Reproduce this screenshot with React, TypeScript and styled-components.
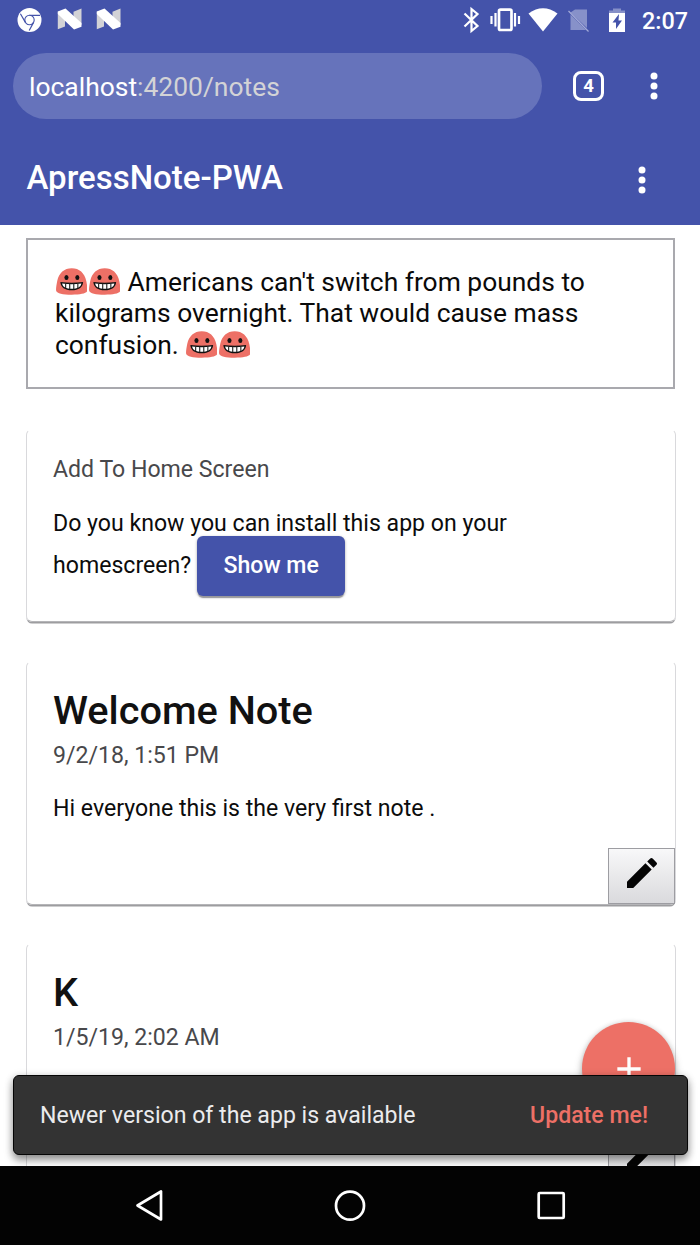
import React from "react";
import styled, { createGlobalStyle } from "styled-components";

const Global = createGlobalStyle`
  * { box-sizing: border-box; }
  body { margin: 0; background: #fff; font-family: Roboto, "Liberation Sans", sans-serif; }
  button { font-family: inherit; padding: 0; margin: 0; }
  h1, h2, p { margin: 0; }
  svg { display: block; flex: none; }
`;

const Screen = styled.div`
  position: relative;
  display: flex;
  flex-direction: column;
  width: 700px;
  height: 1245px;
  overflow: hidden;
  background: #fff;
`;

const BrowserChrome = styled.header`
  flex: none;
  height: 133px;
  background: #4453aa;
  color: #fff;
`;

const StatusBar = styled.div`
  display: flex;
  align-items: center;
  height: 40px;
  padding: 0 12px 0 17px;
`;

const Notifications = styled.div`
  display: flex;
  gap: 13.5px;
  margin-right: auto;
`;

const SystemIcons = styled.div`
  display: flex;
  align-items: center;
`;

const Clock = styled.span`
  width: 46px;
  margin-left: 16px;
  padding-top: 2px;
  font-size: 23.4px;
  font-weight: 500;
  line-height: 28px;
`;

const AddressRow = styled.div`
  display: flex;
  align-items: center;
  padding: 13px 26px 0 13px;
`;

const AddressField = styled.div`
  width: 529px;
  height: 66px;
  padding: 2px 16px 0;
  border-radius: 33px;
  background: #6673bb;
  font-size: 26.45px;
  line-height: 64.5px;
`;

const Path = styled.span`
  color: #d3d3d6;
`;

const TabCount = styled.div`
  display: flex;
  align-items: center;
  justify-content: center;
  width: 31px;
  height: 30px;
  margin-left: 31px;
  border: 3px solid #fff;
  border-radius: 8px;
  font-size: 18.5px;
  font-weight: 700;
  line-height: 24px;
`;

const MenuButton = styled.button<{ $left: string }>`
  width: 40px;
  height: 40px;
  margin-left: ${(p) => p.$left};
  border: 0;
  background: none;
  color: #fff;
`;

const Toolbar = styled.div`
  display: flex;
  align-items: center;
  flex: none;
  height: 92px;
  padding: 1px 38.5px 0 26.5px;
  background: #4453aa;
  color: #fff;
`;

const AppTitle = styled.h1`
  font-size: 33px;
  font-weight: 500;
  line-height: 40px;
  margin-top: -3px;
`;

const Content = styled.main`
  flex: 1;
  min-height: 0;
  overflow: hidden;
  padding: 13px 24px 0 26px;
`;

const Joke = styled.p`
  height: 151px;
  margin: 0 1px 40px 0;
  padding: 27px 26px 0 27px;
  border: 2px solid #a9a9ae;
  font-size: 26.4px;
  line-height: 31.4px;
  color: #0a0a0a;
`;

const Emoji = styled.svg`
  && { display: inline-block; }
  width: 31.5px;
  height: 27px;
  margin: 0 1px 0 0.5px;
  vertical-align: -4px;
`;

const Card = styled.article<{ $height: string }>`
  display: flex;
  flex-direction: column;
  height: ${(p) => p.$height};
  margin-bottom: 38px;
  padding: 26px 26px 0;
  border: 1px solid #d9d9dc;
  border-top-color: transparent;
  border-bottom-color: #b5b5b8;
  border-radius: 6px;
  box-shadow: 0 2px 0 -0.5px #9d9da0;
`;

const InstallCard = styled(Card)`
  margin-bottom: 39px;
`;

const Subtitle = styled.div`
  font-size: 23.1px;
  line-height: 28px;
  color: #48484b;
`;

const NoteTitle = styled.h2`
  margin: -1px 0 7px;
  font-size: 39.7px;
  font-weight: 500;
  line-height: 48px;
  color: #111;
`;

const Body = styled.p<{ $top: string; $line: string }>`
  margin-top: ${(p) => p.$top};
  font-size: 23.1px;
  line-height: ${(p) => p.$line};
  color: #0c0c0c;
`;

const InstallRow = styled.div`
  display: flex;
  align-items: center;
  margin-top: -2px;
  font-size: 23.1px;
  color: #0c0c0c;

  span { padding-bottom: 2px; }
`;

const RaisedButton = styled.button`
  width: 148px;
  height: 60px;
  margin-left: 6px;
  padding-bottom: 2px;
  border: 0;
  border-radius: 6px;
  background: #4453aa;
  color: #fff;
  font-size: 23.1px;
  font-weight: 500;
  box-shadow: 0 3px 1px -1px #98989c, 0 1px 3px rgba(0, 0, 0, 0.35);
`;

const EditButton = styled.button`
  display: flex;
  align-items: center;
  justify-content: center;
  align-self: flex-end;
  width: 67px;
  height: 56px;
  margin: auto -26px 0 0;
  padding-bottom: 6px;
  border: 1px solid #9d9da2;
  background: linear-gradient(#f8f8f9, #dadadd);
`;

const Fab = styled.button`
  position: absolute;
  left: 582px;
  top: 1022px;
  display: flex;
  align-items: center;
  justify-content: center;
  width: 93px;
  height: 93px;
  border: 0;
  border-radius: 50%;
  background: #ed7066;
  color: #fff;
  box-shadow: 0 5px 8px rgba(0, 0, 0, 0.28), 0 0 5px rgba(0, 0, 0, 0.15);
`;

const Snackbar = styled.div`
  position: absolute;
  left: 13px;
  top: 1075px;
  display: flex;
  align-items: center;
  justify-content: space-between;
  width: 675px;
  height: 80px;
  padding: 0 39px 0 26px;
  border: 1px solid #050505;
  border-radius: 6px;
  background: #333;
  color: #ebebed;
  font-size: 23.1px;
  box-shadow: 0 5px 8px rgba(0, 0, 0, 0.4), 0 1px 9px rgba(0, 0, 0, 0.15);
`;

const SnackAction = styled.button`
  border: 0;
  background: none;
  color: #ed7066;
  font-size: 23.1px;
  font-weight: 500;
`;

const NavBar = styled.nav`
  display: flex;
  align-items: center;
  justify-content: center;
  gap: 160px;
  flex: none;
  height: 79px;
  background: #030303;
`;

const Grin = () => (
  <Emoji viewBox="0 0 31 27" preserveAspectRatio="none">
    <path d="M15.5.3C23 .3 28 5 29.800 13c.7 4 1.500 8 1 10-.8 2.400-6.300 3.700-15.300 3.700S1 25.400.2 23c-.5-2 .3-6 1-10C3 5 8 .3 15.500.3z" fill="#ed7066" />
    <ellipse cx="10.300" cy="9.500" rx="2" ry="2.500" fill="#111" />
    <ellipse cx="21" cy="9.500" rx="2" ry="2.500" fill="#111" />
    <path d="M4.300 14q11.200 1.500 22.400 0c-.3 5.500-4.500 8.300-11.200 8.300S4.600 19.500 4.300 14z" fill="#111" />
    <path d="M6 15.500q9.500 1.300 19 0c-.7 3.700-4 5.300-9.500 5.300S6.700 19.200 6 15.500z" fill="#fff" />
    <path d="M9.500 15.500V20M13.500 15.500V21M17.500 15.500V21M21.500 15.500V20" stroke="#222" strokeWidth="1.100" />
  </Emoji>
);

const Dots = () => (
  <svg width="40" height="40" viewBox="0 0 24 24" fill="currentColor">
    <circle cx="12" cy="6" r="2.1" />
    <circle cx="12" cy="12" r="2.1" />
    <circle cx="12" cy="18" r="2.1" />
  </svg>
);

const Pencil = () => (
  <svg width="40" height="40" viewBox="0 0 24 24" fill="#050505">
    <path d="M3 17.250V21h3.750L17.810 9.940l-3.750-3.750L3 17.250zM20.710 7.040a1 1 0 0 0 0-1.410l-2.340-2.340a1 1 0 0 0-1.410 0l-1.830 1.830 3.750 3.750 1.830-1.830z" />
  </svg>
);

const ChromeIcon = () => (
  <svg width="26" height="26" viewBox="0 0 26 26" fill="none">
    <circle cx="12.500" cy="13" r="12" fill="#fff" />
    <circle cx="12.500" cy="13" r="4.700" stroke="#4453aa" strokeWidth="1.100" />
    <path d="M12.500 8.300H23M8.400 15.400 3.400 6.800M16.600 15.400 12.200 23.500" stroke="#4453aa" strokeWidth="1.200" />
  </svg>
);

const NougatIcon = () => (
  <svg width="26" height="24" viewBox="0 0 26 24">
    <path d="M.8 4.500 8 7v12.500l-7.200 2.700zM16.500 12V4.800l8-3.300V18z" fill="#d2d2d6" />
    <path d="M.8 4.500 8.500 1.500 24.500 16v3.700L17 22.500.8 7z" fill="#fff" />
  </svg>
);

const StatusIcons = () => (
  <svg width="166" height="30" viewBox="460 5 166 30" fill="none" stroke="#fff">
    <path d="m464.500 13.500 13 12.500-6 5V9l6 5-13 12.500" strokeWidth="2.200" />
    <rect x="499" y="9.700" width="12.500" height="20.300" rx="1.500" strokeWidth="2.700" />
    <path d="M495.500 13v13.500M491.500 16v8M515 13v13.500M519 16v8" strokeWidth="2.200" />
    <path d="M528.500 13.500q14.500-10.500 29 0L543 31.500z" fill="#fff" stroke="none" />
    <path d="M575 9.500h12V28L570.500 12.500zM570.500 14.500 586 30h-15.500z" fill="#8791c9" stroke="none" />
    <path d="m568.500 11 20 20.500" stroke="#a5acd8" strokeWidth="1.200" />
    <path d="M609 12V10.500h4V8.500h8v2h4V13h-16z" fill="#8690c8" stroke="none" />
    <path d="M609 13h16v19h-16z" fill="#fff" stroke="none" />
    <path d="m619 14-6.500 8.500h3.500V29l6-8.500h-3.500z" fill="#4453aa" stroke="none" />
  </svg>
);

type NoteProps = { title: string; date: string; text?: string };

const Note = ({ title, date, text }: NoteProps) => (
  <Card $height="244px">
    <NoteTitle>{title}</NoteTitle>
    <Subtitle>{date}</Subtitle>
    {text && <Body $top="25px" $line="28px">{text}</Body>}
    <EditButton aria-label="Edit"><Pencil /></EditButton>
  </Card>
);

export default function App() {
  return (
    <Screen>
      <Global />
      <BrowserChrome>
        <StatusBar>
          <Notifications>
            <ChromeIcon />
            <NougatIcon />
            <NougatIcon />
          </Notifications>
          <SystemIcons>
            <StatusIcons />
            <Clock>2:07</Clock>
          </SystemIcons>
        </StatusBar>
        <AddressRow>
          <AddressField>localhost<Path>:4200/notes</Path></AddressField>
          <TabCount>4</TabCount>
          <MenuButton $left="30px" aria-label="Browser menu"><Dots /></MenuButton>
        </AddressRow>
      </BrowserChrome>
      <Toolbar>
        <AppTitle>ApressNote-PWA</AppTitle>
        <MenuButton $left="auto" aria-label="App menu"><Dots /></MenuButton>
      </Toolbar>
      <Content>
        <Joke>
          <Grin /><Grin /> Americans can't switch from pounds to<br />
          kilograms overnight. That would cause mass<br />
          confusion. <Grin /><Grin />
        </Joke>
        <InstallCard $height="193px">
          <Subtitle>Add To Home Screen</Subtitle>
          <Body $top="26px" $line="28px">Do you know you can install this app on your</Body>
          <InstallRow>
            <span>homescreen?</span>
            <RaisedButton>Show me</RaisedButton>
          </InstallRow>
        </InstallCard>
        <Note title="Welcome Note" date="9/2/18, 1:51 PM" text="Hi everyone this is the very first note ." />
        <Note title="K" date="1/5/19, 2:02 AM" />
      </Content>
      <Fab aria-label="Add note">
        <svg width="40" height="40" viewBox="0 0 24 24" fill="currentColor">
          <path d="M19 13h-6v6h-2v-6H5v-2h6V5h2v6h6z" />
        </svg>
      </Fab>
      <Snackbar>
        <span>Newer version of the app is available</span>
        <SnackAction>Update me!</SnackAction>
      </Snackbar>
      <NavBar>
        <svg width="40" height="40" viewBox="0 0 40 40" fill="none" stroke="#fff" strokeWidth="2.700" strokeLinejoin="round">
          <path d="M31 5.500v28L7.500 19.500z" />
        </svg>
        <svg width="40" height="40" viewBox="0 0 40 40" fill="none" stroke="#fff" strokeWidth="2.700">
          <circle cx="20" cy="19.700" r="14" />
        </svg>
        <svg width="40" height="40" viewBox="0 0 40 40" fill="none" stroke="#fff" strokeWidth="2.700">
          <rect x="8.700" y="7" width="25" height="25" rx="1" />
        </svg>
      </NavBar>
    </Screen>
  );
}
